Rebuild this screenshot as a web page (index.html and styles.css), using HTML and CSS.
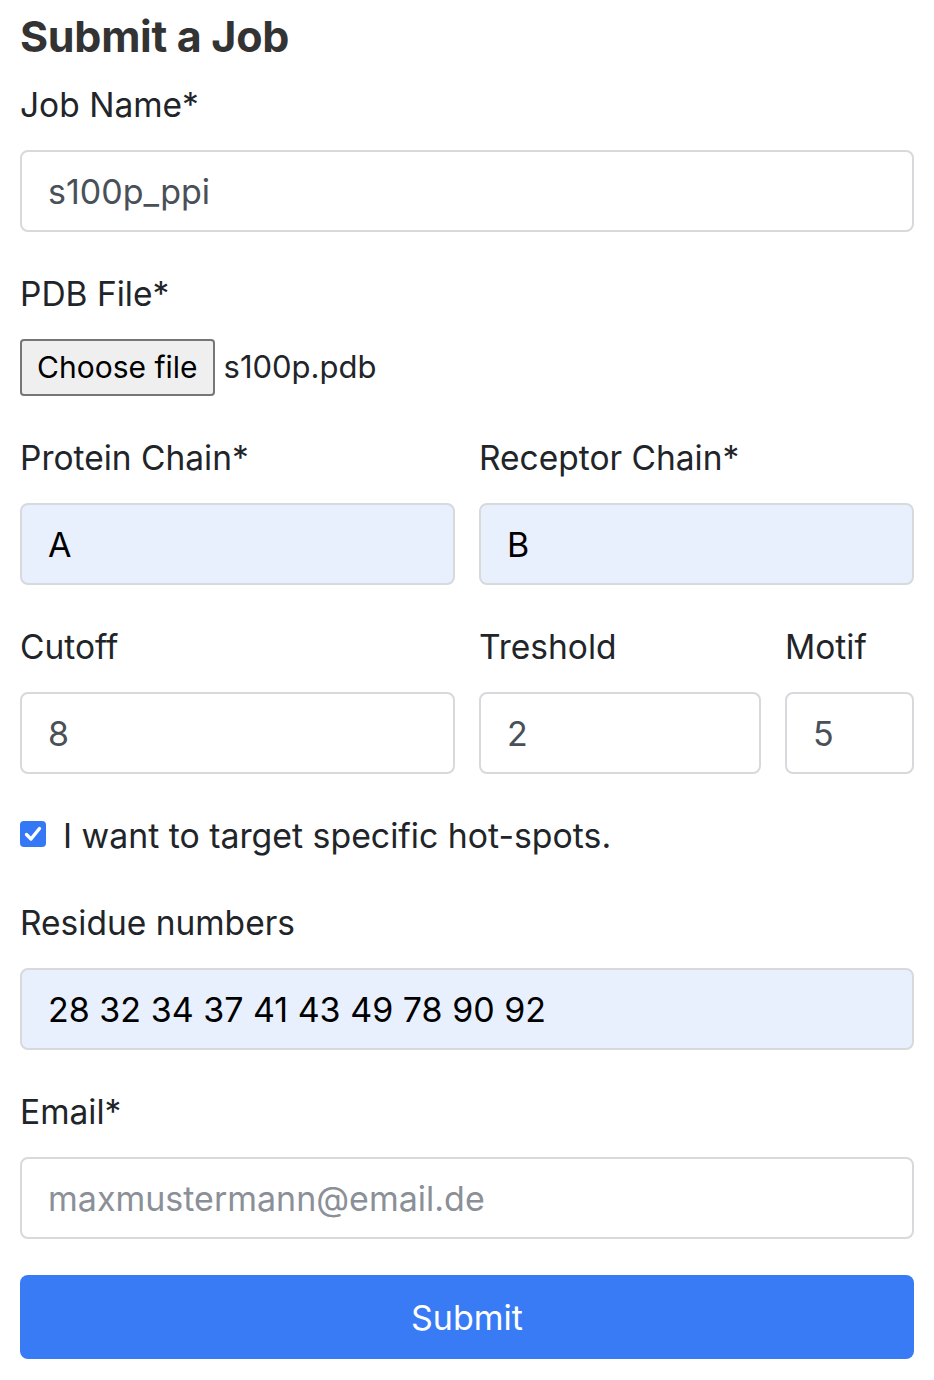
FILE: index.html
```html
<!DOCTYPE html>
<html lang="en">
<head>
<meta charset="utf-8">
<title>Submit a Job</title>
<link rel="stylesheet" href="styles.css">
</head>
<body>
<main class="page">
  <h4 class="title">Submit a Job</h4>
  <form class="job-form">
    <div class="group">
      <label class="label" for="jobname">Job Name*</label>
      <input class="control" id="jobname" type="text" value="s100p_ppi">
    </div>
    <div class="group">
      <label class="label">PDB File*</label>
      <div class="file-row">
        <span class="file-btn">Choose file</span>
        <span class="file-name">s100p.pdb</span>
      </div>
    </div>
    <div class="row group">
      <div class="col col-6">
        <label class="label" for="pchain">Protein Chain*</label>
        <input class="control autofill" id="pchain" type="text" value="A">
      </div>
      <div class="col col-6">
        <label class="label" for="rchain">Receptor Chain*</label>
        <input class="control autofill" id="rchain" type="text" value="B">
      </div>
    </div>
    <div class="row group">
      <div class="col col-6">
        <label class="label" for="cutoff">Cutoff</label>
        <input class="control" id="cutoff" type="text" value="8">
      </div>
      <div class="col col-4">
        <label class="label" for="treshold">Treshold</label>
        <input class="control" id="treshold" type="text" value="2">
      </div>
      <div class="col col-2">
        <label class="label" for="motif">Motif</label>
        <input class="control" id="motif" type="text" value="5">
      </div>
    </div>
    <div class="group check-row">
      <span class="check-box">
        <svg viewBox="0 0 26 26" width="26" height="26" aria-hidden="true">
          <rect x="0" y="0" width="26" height="26" rx="4" fill="#3478f6"/>
          <path d="M6.5 13.5 L11 18 L19.5 7.5" fill="none" stroke="#fff" stroke-width="3.4" stroke-linecap="round" stroke-linejoin="round"/>
        </svg>
      </span>
      <span class="check-label">I want to target specific hot-spots.</span>
    </div>
    <div class="group">
      <label class="label" for="residues">Residue numbers</label>
      <input class="control autofill" id="residues" type="text" value="28 32 34 37 41 43 49 78 90 92">
    </div>
    <div class="group group-last">
      <label class="label" for="email">Email*</label>
      <input class="control" id="email" type="email" placeholder="maxmustermann@email.de">
    </div>
    <button class="submit" type="button">Submit</button>
  </form>
</main>
</body>
</html>
```

FILE: styles.css
```css
* { box-sizing: border-box; }

html, body {
  margin: 0;
  padding: 0;
  background: #ffffff;
}

body {
  font-family: Inter, "Noto Sans", "Liberation Sans", sans-serif;
  color: #212529;
  font-size: 34px;
  line-height: 1.5;
}

.page {
  padding: 10px 20px 0 20px;
}

.title {
  margin: 0 0 17px 0;
  font-size: 43px;
  line-height: 53px;
  font-weight: 700;
  color: #333333;
  letter-spacing: -0.3px;
}

.job-form {
  display: flex;
  flex-direction: column;
}

.group {
  margin-bottom: 37px;
}

.group-last {
  margin-bottom: 36px;
}

.label {
  display: block;
  margin-bottom: 19px;
  font-size: 33.5px;
  line-height: 51px;
  color: #212529;
}

.control {
  display: block;
  width: 100%;
  height: 82px;
  padding: 0 26px;
  font-family: inherit;
  font-size: 34px;
  color: #495057;
  background: #ffffff;
  border: 2px solid #d7d9dc;
  border-radius: 8px;
  outline: none;
}

.control::placeholder {
  color: #8b9098;
}

.control.autofill {
  background: #e8f0fe;
  color: #000000;
}

.file-row {
  display: flex;
  align-items: center;
  gap: 9px;
}

.file-btn {
  display: inline-flex;
  align-items: center;
  height: 57px;
  padding: 0 15px;
  background: #efefef;
  border: 2px solid #767676;
  border-radius: 4px;
  font-size: 30px;
  color: #000000;
}

.file-name {
  font-size: 31px;
  color: #212529;
}

.row {
  display: flex;
  margin-left: -12px;
  margin-right: -12px;
}

.col {
  padding: 0 12px;
}

.col-6 { width: 50%; }
.col-4 { width: 33.3333%; }
.col-2 { width: 16.6667%; }

.check-row {
  display: flex;
  align-items: center;
  gap: 17px;
  height: 50px;
}

.check-box {
  display: inline-flex;
  width: 26px;
  height: 26px;
  margin-top: -4px;
}

.check-label {
  font-size: 33.8px;
  color: #212529;
}

.submit {
  display: block;
  width: 100%;
  height: 84px;
  border: none;
  border-radius: 8px;
  background: #387bf5;
  color: #ffffff;
  font-family: inherit;
  font-size: 34px;
  cursor: pointer;
}
```
